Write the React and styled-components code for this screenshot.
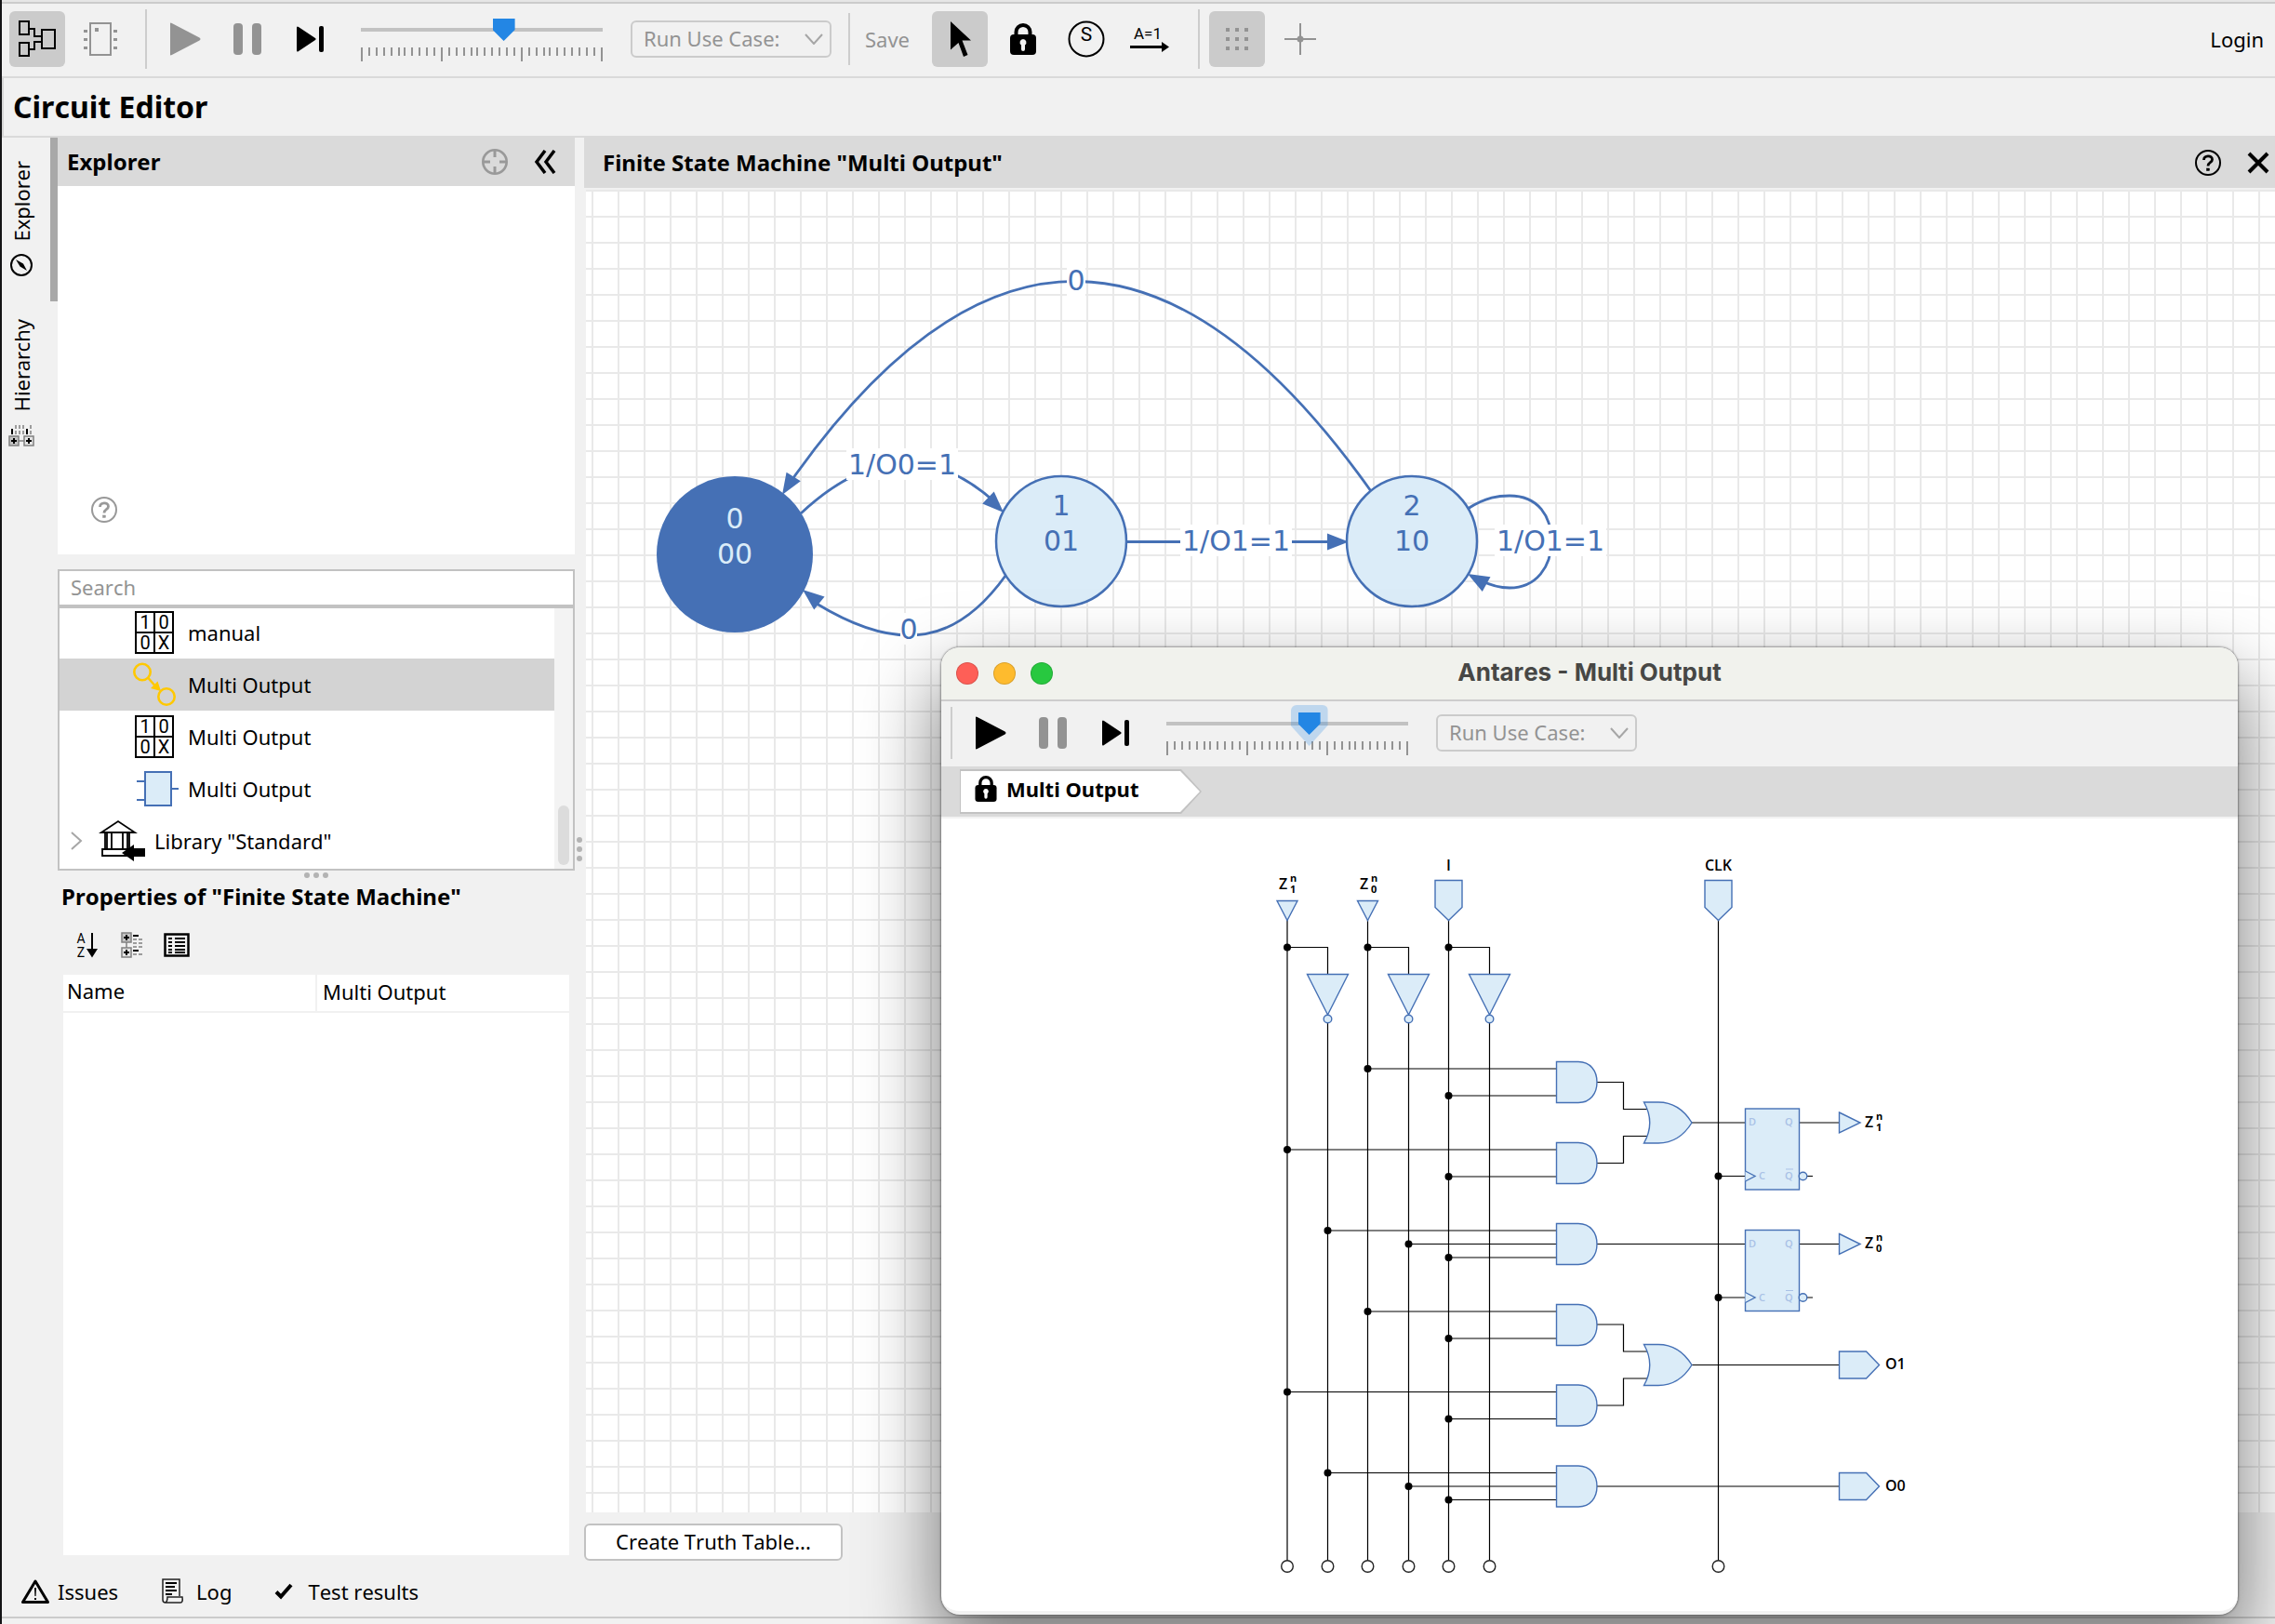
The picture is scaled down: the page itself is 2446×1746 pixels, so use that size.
import React, { useState } from "react";
import styled, { createGlobalStyle, css } from "styled-components";

const BLUE = "#4570b5";
const PALE = "#dbecf8";
const GREY = "#939393";
const BAR = "#dadada";
const CHROME = "#f1f1f1";

const Global = createGlobalStyle`
  *, *::before, *::after { box-sizing: border-box; }
  body {
    margin: 0;
    background: ${CHROME};
    color: #000;
    font-family: "Noto Sans", "Open Sans", sans-serif;
    font-size: 22px;
    line-height: 32px;
    font-kerning: none;
  }
  button, input, select { font: inherit; color: inherit; margin: 0; font-kerning: none; }
  h1, h2, h3, ul { margin: 0; padding: 0; }
`;

/* ---------- shell ---------- */

const App_ = styled.div`
  position: relative;
  display: flex;
  flex-direction: column;
  height: 100vh;
  border-left: 2px solid #141416;
  background: ${CHROME};
  overflow: hidden;
`;

const TopEdge = styled.div`
  height: 4px;
  border-bottom: 2px solid #cbcbcb;
  background: #e6e6e6;
`;

const Toolbar = styled.header`
  display: flex;
  align-items: center;
  height: 80px;
  padding: 0 12px 2px 8px;
  border-bottom: 2px solid ${BAR};
`;

const ToolGroup = styled.div`
  display: flex;
  align-items: center;
  gap: 8px;
`;

const TitleBar = styled.div`
  display: flex;
  align-items: center;
  height: 64px;
  padding-left: 10px;
  border-left: 2px solid #d6d6d6;
  border-bottom: 2px solid ${BAR};
`;

const Title = styled.h1`
  font-size: 32px;
  line-height: 40px;
`;

const Main = styled.main`
  display: flex;
  flex: 1;
  min-height: 0;
`;

const StatusBar = styled.footer`
  display: flex;
  align-items: center;
  gap: 46px;
  height: 60px;
  padding: 0 20px 4px;
  border-bottom: 6px solid ${CHROME};
  box-shadow: inset 0 -2px 0 #cbcbcb;
`;

/* ---------- buttons ---------- */

const plain = css`
  display: inline-flex;
  align-items: center;
  justify-content: center;
  padding: 0;
  border: 0;
  background: none;
`;

const ToolButton = styled.button`
  ${plain}
  flex: none;
  width: ${(p) => (p.$wide ? 60 : 50)}px;
  height: 60px;
  border-radius: 6px;
  background: ${(p) => (p.$active ? "#cbcbcb" : "none")};
`;

const TextButton = styled.button`
  ${plain}
  gap: ${(p) => p.$gap || 0}px;
  color: ${(p) => (p.$muted ? GREY : "#000")};
`;

const SaveButton = styled(TextButton)`
  margin-right: 24px;
`;

const IconButton = styled.button`
  ${plain}
  width: 28px;
  height: 28px;
`;

const PushButton = styled.button`
  ${plain}
  height: 40px;
  padding: 0 32px 2px;
  border: 2px solid #c2c2c2;
  border-radius: 6px;
  background: #fff;
`;

const Spacer = styled.div`
  flex: 1;
`;

const Separator = styled.div`
  flex: none;
  width: 2px;
  height: ${(p) => p.$height || 64}px;
  margin: 0 ${(p) => p.$after || 0}px 0 ${(p) => p.$before || 0}px;
  background: #cdcdcd;
`;

/* ---------- transport (play / pause / step / speed / use case) ---------- */

const TransportRow = styled.div`
  display: flex;
  align-items: center;
`;

const PlayGroup = styled.div`
  display: flex;
  gap: 17px;
`;

const SpeedBox = styled.div`
  position: relative;
  display: flex;
  flex-direction: column;
  width: 260px;
  height: 60px;
  margin: 0 30px;
  padding-top: 8px;
`;

const thumbShape = css`
  clip-path: polygon(0 0, 100% 0, 100% 50%, 50% 100%, 0 50%);
`;

const Speed = styled.input`
  appearance: none;
  width: 100%;
  height: 24px;
  background: linear-gradient(#c2c2c2, #c2c2c2) center 10px / 100% 4px no-repeat;
  outline: none;

  &::-webkit-slider-thumb {
    appearance: none;
    width: 24px;
    height: 24px;
    background: #2386e4;
    ${thumbShape}
  }
`;

const Halo = styled.span`
  position: absolute;
  top: 0;
  width: 40px;
  height: 44px;
  border-radius: 6px 6px 0 0;
  background: rgba(35, 134, 228, 0.24);
  pointer-events: none;
  ${thumbShape}
`;

const Ticks = styled.svg`
  display: block;
  margin-top: 7px;
  overflow: visible;
`;

const SelectBox = styled.label`
  position: relative;
  display: flex;
  align-items: center;
  width: 216px;
  height: 40px;

  svg {
    position: absolute;
    right: 9px;
    pointer-events: none;
  }
`;

const Select = styled.select`
  appearance: none;
  width: 100%;
  height: 100%;
  padding: 0 36px 2px 12px;
  border: 2px solid #cbcbcb;
  border-radius: 6px;
  background: ${CHROME};
  color: ${GREY};
`;

const TICK_STEPS = [
  [8, 8, 8, 8, 8, 6, 8, 8, 8, 8, 8],
  [8, 8, 8, 8, 6, 8, 8, 8, 8, 8, 8],
  [8, 8, 8, 6, 8, 8, 8, 8, 8, 8, 8],
];

function TickMarks() {
  const marks = [];
  let x = 0;
  TICK_STEPS.forEach((group) =>
    group.forEach((step, i) => {
      marks.push([x, i === 0]);
      x += step;
    })
  );
  marks.push([x, true]);
  return (
    <Ticks width="260" height="16" aria-hidden="true">
      {marks.map(([at, major]) => (
        <rect key={at} x={at} y="0" width="2" height={major ? 15 : 9} fill={GREY} />
      ))}
    </Ticks>
  );
}

function Transport({ playing, focused, name }) {
  const [speed, setSpeed] = useState(60);
  return (
    <TransportRow>
      <PlayGroup>
        <ToolButton aria-label="Play">
          <svg width="34" height="36" viewBox="0 0 34 36">
            <path d="M1 1.5Q1-.2 2.800 1L32.500 16.500Q34.500 18 32.500 19.500L2.800 35Q1 36.200 1 34.500Z" fill={playing ? "#000" : GREY} />
          </svg>
        </ToolButton>
        <ToolButton aria-label="Pause">
          <svg width="30" height="34" viewBox="0 0 30 34" fill={GREY}>
            <rect width="10" height="34" rx="4" />
            <rect x="20" width="10" height="34" rx="4" />
          </svg>
        </ToolButton>
        <ToolButton aria-label="Step">
          <svg width="30" height="30" viewBox="0 0 30 30">
            <path d="M1 3Q1 .5 3 2L21 14Q22.500 15 21 16L3 28Q1 29.500 1 27Z" />
            <rect x="25" y="1" width="5" height="28" rx="2" />
          </svg>
        </ToolButton>
      </PlayGroup>
      <SpeedBox>
        {focused && <Halo style={{ left: (speed / 100) * 236 - 8 }} />}
        <Speed
          type="range"
          min="0"
          max="100"
          value={speed}
          aria-label={name + " speed"}
          onChange={(e) => setSpeed(Number(e.target.value))}
        />
        <TickMarks />
      </SpeedBox>
      <SelectBox>
        <Select aria-label={name + " use case"}>
          <option>Run Use Case:</option>
        </Select>
        <svg width="20" height="12" viewBox="0 0 20 12" fill="none" stroke="#a6a6a6" strokeWidth="2">
          <path d="M1 1L10 11L19 1" />
        </svg>
      </SelectBox>
    </TransportRow>
  );
}

/* ---------- icons ---------- */

const CircuitIcon = () => (
  <svg width="42" height="50" viewBox="0 0 42 50" fill="none" stroke="#000" strokeWidth="2">
    <rect x="2" y="6" width="10" height="14" />
    <rect x="2" y="29" width="10" height="14" />
    <rect x="26" y="15" width="14" height="20" />
    <path d="M12 14H18V22H26M12 36H18V28H26" />
  </svg>
);

const ChipIcon = () => (
  <svg width="36" height="36" viewBox="0 0 36 36" fill={GREY}>
    <rect x="7" y="1" width="22" height="34" fill="none" stroke={GREY} strokeWidth="2" />
    <path d="M12 6h4v4h-4zM0 8h4v3H0zM0 17h4v3H0zM0 26h4v3H0zM32 8h4v3h-4zM32 17h4v3h-4zM32 26h4v3h-4z" />
  </svg>
);

const PointerIcon = () => (
  <svg width="26" height="40" viewBox="0 0 26 40">
    <path d="M3 1L25 21.500H15.500L21.500 37L17 39L11.500 24L3 31.500Z" />
  </svg>
);

const LockIcon = ({ width = 28, height = 34, hole = CHROME }) => (
  <svg width={width} height={height} viewBox="0 0 28 34">
    <path d="M6.500 14V9.500a7.500 7.500 0 0 1 15 0V14" fill="none" stroke="#000" strokeWidth="4" />
    <rect y="12" width="28" height="22" rx="4" />
    <path d="M14 17a3.600 3.600 0 0 1 2 6.500V28a2 2 0 0 1-4 0V23.500A3.600 3.600 0 0 1 14 17Z" fill={hole} />
  </svg>
);

const StateIcon = () => (
  <svg width="40" height="40" viewBox="0 0 40 40">
    <circle cx="20" cy="20" r="18.500" fill="none" stroke="#000" strokeWidth="2" />
    <text x="20" y="22" fontSize="21" fontFamily="Roboto, sans-serif" textAnchor="middle">S</text>
  </svg>
);

const AssignIcon = () => (
  <svg width="42" height="34" viewBox="0 0 42 34">
    <text x="19" y="17" fontSize="17" fontFamily="Roboto, sans-serif" textAnchor="middle">A=1</text>
    <path d="M0 24H34V20L42 25.500L34 31V27H0Z" />
  </svg>
);

const DotGridIcon = () => (
  <svg width="26" height="26" viewBox="0 0 26 26" fill={GREY}>
    {[0, 10, 20].map((y) => [0, 10, 20].map((x) => <rect key={x + "-" + y} x={x + 1} y={y + 1} width="4" height="4" />))}
  </svg>
);

const CrossIcon = () => (
  <svg width="34" height="34" viewBox="0 0 34 34" fill={GREY}>
    <path d="M16 0h2v34h-2zM0 16h34v2H0z" />
    <circle cx="17" cy="17" r="3.500" />
  </svg>
);

const HelpIcon = ({ color = "#000" }) => (
  <svg width="28" height="28" viewBox="0 0 28 28" fill="none" stroke={color}>
    <circle cx="14" cy="14" r="13" strokeWidth="2" />
    <path d="M9.500 11C9.500 5.500 18.500 5.500 18.500 10.500C18.500 14 14 13.500 14 17.500" strokeWidth="2.800" />
    <rect x="12.500" y="20" width="3" height="2.500" fill={color} strokeWidth="0.500" />
  </svg>
);

const TargetIcon = () => (
  <svg width="28" height="28" viewBox="0 0 28 28" fill="none" stroke="#999">
    <circle cx="14" cy="14" r="12.700" strokeWidth="2.600" />
    <path d="M14 2V9M14 19V26M2 14H9M19 14H26" strokeWidth="3" />
  </svg>
);

const CollapseIcon = () => (
  <svg width="24" height="26" viewBox="0 0 24 26" fill="none" stroke="#000" strokeWidth="3.500">
    <path d="M12 1L3 13L12 25M22 1L13 13L22 25" />
  </svg>
);

const CloseIcon = () => (
  <svg width="24" height="24" viewBox="0 0 24 24" stroke="#000" strokeWidth="4">
    <path d="M2 2L22 22M22 2L2 22" />
  </svg>
);

const CompassIcon = () => (
  <svg width="26" height="26" viewBox="0 0 26 26">
    <circle cx="13" cy="13" r="11" fill="none" stroke="#000" strokeWidth="2" />
    <path d="M7 7L15 11.500L19 19L11.500 14.500Z" />
  </svg>
);

const TreeIcon = ({ turned }) => (
  <svg width="28" height="28" viewBox="0 0 28 28" fill="none" stroke="#808080">
    <g transform={turned ? "rotate(-90 14 14)" : undefined}>
      <path d="M8 10V18" strokeWidth="1.500" />
      <rect x="3" y="1" width="10" height="10" strokeWidth="1.500" fill="#c4c4c4" />
      <rect x="3" y="17" width="10" height="10" strokeWidth="1.500" fill="#e4e4e4" />
      <path d="M5 6H11M8 3V9M5 22H11M8 19V25" stroke="#000" strokeWidth="2" />
      <path d="M15 4H21M15 20H21" stroke="#000" strokeWidth="2" />
      <path d="M15 8H19M21 8H25M15 12H19M21 12H25M15 16H19M21 16H25M15 24H19M21 24H25" strokeWidth="1.500" />
    </g>
  </svg>
);

const SortIcon = () => (
  <svg width="28" height="28" viewBox="0 0 28 28" overflow="visible">
    <text x="7" y="12" fontSize="14" fontFamily="Roboto, sans-serif" textAnchor="middle">A</text>
    <text x="7" y="27" fontSize="14" fontFamily="Roboto, sans-serif" textAnchor="middle">Z</text>
    <path d="M18 1h2v17h5L19 27.500L13 18h5Z" />
  </svg>
);

const ListIcon = () => (
  <svg width="28" height="26" viewBox="0 0 28 26">
    <rect x="1.500" y="1.500" width="25" height="23" fill="none" stroke="#000" strokeWidth="2.500" />
    <path d="M5 5h4v2H5zM5 9h4v2H5zM5 13h4v2H5zM5 17h4v2H5zM5 20h4v2H5zM12 5h11v2H12zM12 9h11v2H12zM12 13h11v2H12zM12 17h11v2H12zM12 20h11v2H12z" />
  </svg>
);

const TruthIcon = () => (
  <svg width="48" height="48" viewBox="0 0 48 48">
    <path d="M4 2H44V46H4ZM24 2V46M4 24H44" fill="none" stroke="#000" strokeWidth="2" />
    <g fontSize="20" fontFamily="Roboto, sans-serif" textAnchor="middle">
      <text x="14" y="20">1</text>
      <text x="34" y="20">0</text>
      <text x="14" y="42">0</text>
      <text x="34" y="42">X</text>
    </g>
  </svg>
);

const FsmIcon = () => (
  <svg width="48" height="48" viewBox="0 0 48 48" fill="none" stroke="#ffc800" strokeWidth="2.600">
    <circle cx="11" cy="10.500" r="8.700" />
    <circle cx="37" cy="37" r="8.700" />
    <path d="M17 16.500L24 24.500" />
    <path d="M31 31L20 28L27.500 20.500Z" fill="#ffc800" stroke="none" />
  </svg>
);

const BlockIcon = () => (
  <svg width="48" height="48" viewBox="0 0 48 48" fill={PALE} stroke={BLUE} strokeWidth="2">
    <rect x="14" y="6" width="28" height="36" />
    <path d="M5 16H13M5 36H13M43 24H50" />
  </svg>
);

const LibraryIcon = () => (
  <svg width="48" height="48" viewBox="0 0 48 48" fill="none" stroke="#000" strokeWidth="2">
    <path d="M1 15L19 3L37 15ZM5 15V33M12 15V33M24 15V33M31 15V33M2 33H36V40H2ZM7 15V33M29 15V33" strokeWidth="1.800" />
    <path d="M23 37L36 28V32H48V41H36V46Z" fill="#000" stroke="none" />
  </svg>
);

const ExpandIcon = () => (
  <svg width="12" height="20" viewBox="0 0 12 20" fill="none" stroke="#a6a6a6" strokeWidth="2">
    <path d="M1 1L11 10L1 19" />
  </svg>
);

const IssuesIcon = () => (
  <svg width="32" height="28" viewBox="0 0 32 28">
    <path d="M16 3L29.500 25.500H2.500Z" fill="none" stroke="#000" strokeWidth="3" strokeLinejoin="round" />
    <path d="M15 10h2l-.4 9h-1.200zM15 21h2v2h-2z" />
  </svg>
);

const LogIcon = () => (
  <svg width="26" height="28" viewBox="0 0 26 28" fill="none" stroke="#222" strokeWidth="1.500">
    <path d="M20 19V1H2V23Q2 26 5 26H21Q24 26 23 20H7Q7 26 4 26" />
    <path d="M5 5H17M5 9H15M5 13H17M5 17H12" stroke="#000" strokeWidth="2" />
  </svg>
);

const CheckIcon = () => (
  <svg width="20" height="18" viewBox="0 0 20 18" fill="none" stroke="#000" strokeWidth="4">
    <path d="M2 9.500L7 14.500L18 2" />
  </svg>
);

/* ---------- left side ---------- */

const SideTabs = styled.nav`
  display: flex;
  flex: none;
  flex-direction: column;
  width: 60px;
`;

const SideTab = styled.button`
  ${plain}
  flex-direction: column;
  justify-content: flex-end;
  gap: 12px;
  height: ${(p) => (p.$active ? 176 : 168)}px;
  padding: 0 10px ${(p) => (p.$active ? 26 : 10)}px 0;
  border-right: 8px solid ${(p) => (p.$active ? "#a8a8a8" : "transparent")};

  span {
    writing-mode: vertical-rl;
    transform: rotate(180deg);
  }
`;

const LeftColumn = styled.aside`
  display: flex;
  flex: none;
  flex-direction: column;
  width: 556px;
  padding-bottom: 14px;
`;

const PaneHeader = styled.div`
  display: flex;
  flex: none;
  align-items: center;
  gap: 26px;
  height: ${(p) => (p.$tall ? 54 : 52)}px;
  padding: 0 ${(p) => (p.$tall ? 4 : 18)}px 0 ${(p) => (p.$tall ? 20 : 10)}px;
  background: ${BAR};
`;

const PaneTitle = styled.h2`
  font-size: 24px;
  line-height: 36px;
`;

const Preview = styled.div`
  display: flex;
  flex: none;
  align-items: flex-end;
  height: 396px;
  margin-bottom: 16px;
  padding: 0 36px 34px;
  background: #fff;
`;

const Search = styled.input`
  flex: none;
  height: 40px;
  padding: 0 12px 2px;
  border: 2px solid #c2c2c2;
  border-radius: 0;
  background: #fff;

  &::placeholder {
    color: ${GREY};
    opacity: 1;
  }
`;

const TreeBox = styled.div`
  display: flex;
  flex: none;
  height: 284px;
  border: 2px solid #c2c2c2;
  background: #fff;
`;

const Tree = styled.ul`
  display: flex;
  flex: 1;
  flex-direction: column;
  justify-content: flex-end;
  padding-bottom: 2px;
  overflow: hidden;
  list-style: none;
`;

const TreeRow = styled.li`
  flex: none;
  height: 56px;
  background: ${(p) => (p.$selected ? "#d3d3d3" : "transparent")};

  button {
    ${plain}
    justify-content: flex-start;
    gap: ${(p) => (p.$root ? 10 : 12)}px;
    width: 100%;
    height: 100%;
    padding-left: ${(p) => (p.$root ? 12 : 78)}px;
  }

  button > svg:first-child:not(:only-of-type) {
    margin-right: 10px;
  }

  svg {
    overflow: visible;
  }
`;

const ScrollTrack = styled.div`
  display: flex;
  align-items: flex-end;
  justify-content: center;
  width: 20px;
  padding-bottom: 4px;
  background: #f3f3f3;

  &::after {
    content: "";
    width: 12px;
    height: 64px;
    border-radius: 6px;
    background: #dcdcdc;
  }
`;

const Grip = styled.div`
  display: flex;
  flex: none;
  flex-direction: ${(p) => (p.$vertical ? "column" : "row")};
  align-items: center;
  justify-content: center;
  gap: 4px;
  ${(p) => (p.$vertical ? "width: 10px; padding-bottom: 8px;" : "height: 10px;")}

  i {
    width: 6px;
    height: 6px;
    border-radius: 50%;
    background: #b3b3b3;
  }
`;

const SectionTitle = styled(PaneTitle)`
  padding-left: 4px;
`;

const PropertyTools = styled.div`
  display: flex;
  align-items: center;
  gap: 20px;
  height: 66px;
  padding: 2px 0 0 18px;
`;

const PropertySheet = styled.div`
  flex: 1;
  margin: 0 6px;
  background: #fff;
`;

const PropertyTable = styled.table`
  width: 100%;
  border-collapse: collapse;
  table-layout: fixed;

  th, td {
    height: 40px;
    padding: 0 6px 4px;
    border-bottom: 2px solid ${CHROME};
    font-weight: 400;
    text-align: left;
  }

  th {
    padding: 0 4px 6px;
  }

  td {
    border-left: 2px solid ${CHROME};
  }
`;

const ROWS = [
  { label: "manual", Icon: TruthIcon },
  { label: "Multi Output", Icon: FsmIcon, selected: true },
  { label: "Multi Output", Icon: TruthIcon },
  { label: "Multi Output", Icon: BlockIcon },
];

/* ---------- state machine ---------- */

const Editor = styled.section`
  display: flex;
  flex: 1;
  flex-direction: column;
  min-width: 0;
`;

const Canvas = styled.div`
  flex: 1;
  min-height: 0;
  margin-left: 2px;
  border-top: 2px solid ${CHROME};
  background:
    linear-gradient(#e9e9e9 2px, transparent 2px) 0 0 / 28px 28px,
    linear-gradient(90deg, transparent 6px, #e9e9e9 6px, #e9e9e9 8px, transparent 8px) 0 0 / 28px 28px,
    #fff;
`;

const Actions = styled.div`
  display: flex;
  padding: 12px 0 8px;
`;

const Diagram = styled.svg`
  display: block;
  overflow: visible;
  font-family: "DejaVu Sans", sans-serif;
  font-size: 30px;
`;

const STATES = [
  { x: 790, y: 596, r: 84, id: "0", code: "00", first: 568, filled: true },
  { x: 1141, y: 582, r: 70, id: "1", code: "01", first: 554 },
  { x: 1518, y: 582, r: 70, id: "2", code: "10", first: 554 },
];

function Tag({ x, y, width, children }) {
  return (
    <g>
      <rect x={x - width / 2} y={y - 28} width={width} height="34" fill="#fff" />
      <text x={x} y={y} textAnchor="middle" fill={BLUE}>{children}</text>
    </g>
  );
}

function Head({ x, y, angle }) {
  return <path d="M0 0L-23-9V9Z" fill={BLUE} transform={`translate(${x} ${y}) rotate(${angle})`} />;
}

function StateMachine() {
  return (
    <Diagram width="1140" height="520" viewBox="630 204 1140 520" role="img" aria-label="Finite state machine">
      <g fill="none" stroke={BLUE} strokeWidth="2.800">
        <path d="M1474 528Q1157 82 850 518" />
        <path d="M861 552Q970 450 1070 540" />
        <path d="M1081 619C1030 690 970 705 878 649" />
        <path d="M1211 582.500H1430" />
        <path d="M1578 547C1598 534 1612 533 1623 533C1654 533 1668 555 1668 582C1668 609 1652 632 1623 632C1610 632 1600 628 1592 624" />
      </g>
      <Head x={841} y={532} angle={122} />
      <Head x={1079} y={551} angle={44} />
      <Head x={863} y={634} angle={219} />
      <Head x={1450} y={582.5} angle={0} />
      <Head x={1578} y={617} angle={209} />
      {STATES.map((s) => (
        <g key={s.id} textAnchor="middle" fill={s.filled ? PALE : BLUE}>
          <circle cx={s.x} cy={s.y} r={s.r} fill={s.filled ? BLUE : PALE} stroke={s.filled ? "none" : BLUE} strokeWidth="2.500" />
          <text x={s.x} y={s.first}>{s.id}</text>
          <text x={s.x} y={s.first + 38}>{s.code}</text>
        </g>
      ))}
      <Tag x={1157} y={312} width={20}>0</Tag>
      <Tag x={970} y={510} width={120}>1/O0=1</Tag>
      <Tag x={977} y={687} width={18}>0</Tag>
      <Tag x={1329} y={592} width={120}>1/O1=1</Tag>
      <Tag x={1667} y={592} width={120}>1/O1=1</Tag>
    </Diagram>
  );
}

/* ---------- circuit window ---------- */

const Window = styled.section`
  position: absolute;
  top: 696px;
  right: 40px;
  bottom: 10px;
  left: 1010px;
  display: flex;
  flex-direction: column;
  border-bottom: 4px solid #f2f2f2;
  border-radius: 20px;
  background: #fff;
  box-shadow: 0 0 2px 1px rgba(0, 0, 0, 0.35), 0 36px 80px 4px rgba(0, 0, 0, 0.5);
  overflow: hidden;
`;

const WindowBar = styled.div`
  display: flex;
  align-items: center;
  height: 58px;
  padding: 0 16px;
  border-bottom: 2px solid #cdcdcd;
  background: #f1f2ed;
`;

const Lights = styled.div`
  display: flex;
  flex: 1;
  gap: 16px;
`;

const Light = styled.button`
  width: 24px;
  height: 24px;
  padding: 0;
  border: 1px solid rgba(0, 0, 0, 0.14);
  border-radius: 50%;
  background: ${(p) => p.$color};
`;

const WindowTitle = styled.h2`
  padding-bottom: 2px;
  color: #474745;
  font-family: Inter, sans-serif;
  font-size: 26px;
  font-weight: 700;
  line-height: 32px;
`;

const WindowTools = styled.div`
  display: flex;
  align-items: center;
  height: 70px;
  padding: 0 0 2px 10px;
  background: ${CHROME};
`;

const Crumbs = styled.nav`
  display: flex;
  align-items: center;
  height: 56px;
  padding-left: 20px;
  border-bottom: 2px solid #f2f2f2;
  background: ${BAR};
`;

const Crumb = styled.button`
  ${plain}
  justify-content: flex-start;
  gap: 10px;
  width: 260px;
  height: 48px;
  padding: 0 0 6px 16px;
  background: #c2c2c2;
  font-weight: 700;
  clip-path: polygon(0 0, 238px 0, 100% 50%, 238px 100%, 0 100%);
  position: relative;
  isolation: isolate;

  &::before {
    content: "";
    position: absolute;
    inset: 2px 2px 2px 1px;
    z-index: -1;
    background: #fff;
    clip-path: polygon(0 0, 236px 0, 100% 50%, 236px 100%, 0 100%);
  }
`;

const Sheet = styled.div`
  display: flex;
  flex: 1;
  justify-content: center;
  padding-top: 30px;
`;

const Schematic = styled.svg`
  display: block;
  font-family: "Open Sans", "Noto Sans", sans-serif;
  font-size: 16px;
`;

const COLS = { z1: 1384, z1n: 1427.5, z0: 1470.5, z0n: 1514.5, i: 1557.5, in: 1601.5, clk: 1847.5 };

const GATES = [
  { y: 1163.5, ins: [["z0", -14.5], ["i", 14.5]] },
  { y: 1250.5, ins: [["z1", -14.5], ["i", 14.5]] },
  { y: 1337.5, ins: [["z1n", -14.5], ["z0n", 0], ["i", 14.5]] },
  { y: 1424.5, ins: [["z0", -14.5], ["i", 14.5]] },
  { y: 1511, ins: [["z1", -14.5], ["i", 14.5]] },
  { y: 1598, ins: [["z1n", -14.5], ["z0n", 0], ["i", 14.5]] },
];

function Indexed({ x, y, sub }) {
  return (
    <g>
      <text x={x} y={y} fontWeight="600">Z</text>
      <g fontSize="11" fontWeight="700">
        <text x={x + 12} y={y - 8}>n</text>
        <text x={x + 12} y={y + 4}>{sub}</text>
      </g>
    </g>
  );
}

function FlipFlop({ y }) {
  return (
    <g>
      <path d={`M1935 ${y + 15}H1978M${COLS.clk} ${y + 72.5}H1876M1943 ${y + 72.5}H1949`} stroke="#000" strokeWidth="1.200" />
      <rect x="1876.500" y={y} width="58" height="87" />
      <path d={`M1876.500 ${y + 67}L1887 ${y + 72.500}L1876.500 ${y + 78}`} />
      <circle cx="1938.500" cy={y + 72.5} r="4.300" />
      <path d={`M1920 ${y + 65}H1928`} stroke="#a9c1e6" strokeWidth="1" />
      <g fill="#a9c1e6" stroke="none" fontSize="11" fontWeight="600">
        <text x="1880" y={y + 18}>D</text>
        <text x="1919" y={y + 18}>Q</text>
        <text x="1891" y={y + 76}>C</text>
        <text x="1919" y={y + 76}>Q</text>
      </g>
      <circle cx={COLS.clk} cy={y + 72.5} r="4" fill="#000" stroke="none" />
      <path d={`M1977.500 ${y + 4}L2000 ${y + 15}L1977.500 ${y + 26}Z`} />
    </g>
  );
}

function Circuit() {
  const inputs = [
    [COLS.z1, COLS.z1n],
    [COLS.z0, COLS.z0n],
    [COLS.i, COLS.in],
  ];
  return (
    <Schematic width="690" height="790" viewBox="1364 910 690 790" role="img" aria-label="Circuit Multi Output">
      <g fill="none" stroke="#000" strokeWidth="1.200">
        {inputs.map(([a, b]) => (
          <path key={a} d={`M${a} 989V1678M${a} 1018.500H${b}V1047M${b} 1100V1678`} />
        ))}
        <path d={`M${COLS.clk} 989V1678`} />
        {GATES.map((g) => g.ins.map(([c, dy]) => <path key={c + g.y} d={`M${COLS[c]} ${g.y + dy}H1673`} />))}
        {[1207, 1467.5].map((y) => (
          <path key={y} d={`M1717 ${y - 43.5}H1745.500V${y - 14.5}H1771M1717 ${y + 43.5}H1745.500V${y + 14.5}H1771`} />
        ))}
        <path d="M1819 1207H1876M1717 1337.500H1876M1819 1467.500H1978M1717 1598H1978" />
      </g>
      <g>
        {inputs.map(([a]) => <circle key={a} cx={a} cy="1018.500" r="4" />)}
        {GATES.map((g) => g.ins.map(([c, dy]) => <circle key={c + g.y} cx={COLS[c]} cy={g.y + dy} r="4" />))}
      </g>
      <g fill={PALE} stroke={BLUE} strokeWidth="1.400">
        {[COLS.z1, COLS.z0].map((x) => <path key={x} d={`M${x - 11} 968.500H${x + 11}L${x} 989.500Z`} />)}
        {[COLS.i, COLS.clk].map((x) => (
          <path key={x} d={`M${x - 14.5} 946.500H${x + 14.5}V975.500L${x} 989.500L${x - 14.5} 975.500Z`} />
        ))}
        {inputs.map(([, b]) => (
          <g key={b}>
            <path d={`M${b - 22} 1047.500H${b + 22}L${b} 1091Z`} />
            <circle cx={b} cy="1095.500" r="4.300" />
          </g>
        ))}
        {GATES.map((g) => (
          <path key={g.y} d={`M1673.500 ${g.y - 22}H1697C1710 ${g.y - 22} 1717 ${g.y - 12} 1717 ${g.y}S1710 ${g.y + 22} 1697 ${g.y + 22}H1673.500Z`} />
        ))}
        {[1207, 1467.5].map((y) => (
          <path key={y} d={`M1767.500 ${y - 22}H1783C1800 ${y - 22} 1811 ${y - 13} 1819 ${y}C1811 ${y + 13} 1800 ${y + 22} 1783 ${y + 22}H1767.500Q1780 ${y} 1767.500 ${y - 22}Z`} />
        ))}
        <FlipFlop y={1192} />
        <FlipFlop y={1322.5} />
        {[1467.5, 1598].map((y) => (
          <path key={y} d={`M1977.500 ${y - 14.5}H2006.500L2020.500 ${y}L2006.500 ${y + 14.5}H1977.500Z`} />
        ))}
      </g>
      <g fill="#fff" stroke="#222" strokeWidth="1.400">
        {Object.values(COLS).map((x) => <circle key={x} cx={x} cy="1684" r="6.300" />)}
      </g>
      <Indexed x={1375} y={956} sub="1" />
      <Indexed x={1462} y={956} sub="0" />
      <Indexed x={2005} y={1212} sub="1" />
      <Indexed x={2005} y={1342} sub="0" />
      <g fontWeight="600">
        <text x={COLS.i} y="936" textAnchor="middle">I</text>
        <text x={COLS.clk} y="936" textAnchor="middle">CLK</text>
        <text x="2027" y="1472">O1</text>
        <text x="2027" y="1603">O0</text>
      </g>
    </Schematic>
  );
}

function CircuitWindow() {
  return (
    <Window aria-label="Antares">
      <WindowBar>
        <Lights>
          <Light $color="#fe5f57" aria-label="Close window" />
          <Light $color="#febb2e" aria-label="Minimize window" />
          <Light $color="#28c840" aria-label="Zoom window" />
        </Lights>
        <WindowTitle>Antares - Multi Output</WindowTitle>
        <Spacer />
      </WindowBar>
      <WindowTools>
        <Separator $height={56} $after={16} />
        <Transport playing focused name="Simulation" />
      </WindowTools>
      <Crumbs aria-label="Breadcrumb">
        <Crumb>
          <LockIcon width={24} height={28} hole="#fff" />
          Multi Output
        </Crumb>
      </Crumbs>
      <Sheet>
        <Circuit />
      </Sheet>
    </Window>
  );
}

/* ---------- page ---------- */

export default function App() {
  return (
    <App_>
      <Global />
      <TopEdge />
      <Toolbar>
        <ToolGroup>
          <ToolButton $wide $active aria-label="Circuit view"><CircuitIcon /></ToolButton>
          <ToolButton $wide aria-label="Chip view"><ChipIcon /></ToolButton>
        </ToolGroup>
        <Separator $before={18} $after={16} />
        <Transport name="Editor" />
        <Separator $height={56} $before={18} $after={16} />
        <SaveButton $muted>Save</SaveButton>
        <ToolGroup>
          <ToolButton $wide $active aria-label="Select"><PointerIcon /></ToolButton>
          <ToolButton $wide aria-label="Lock"><LockIcon /></ToolButton>
          <ToolButton $wide aria-label="Add state"><StateIcon /></ToolButton>
          <ToolButton $wide aria-label="Add transition"><AssignIcon /></ToolButton>
        </ToolGroup>
        <Separator $before={22} $after={10} />
        <ToolGroup>
          <ToolButton $wide $active aria-label="Show grid"><DotGridIcon /></ToolButton>
          <ToolButton $wide aria-label="Show crosshair"><CrossIcon /></ToolButton>
        </ToolGroup>
        <Spacer />
        <TextButton>Login</TextButton>
      </Toolbar>
      <TitleBar>
        <Title>Circuit Editor</Title>
      </TitleBar>
      <Main>
        <SideTabs aria-label="Views">
          <SideTab $active><span>Explorer</span><CompassIcon /></SideTab>
          <SideTab><span>Hierarchy</span><TreeIcon turned /></SideTab>
        </SideTabs>
        <LeftColumn>
          <PaneHeader>
            <PaneTitle>Explorer</PaneTitle>
            <Spacer />
            <IconButton aria-label="Locate"><TargetIcon /></IconButton>
            <IconButton aria-label="Collapse"><CollapseIcon /></IconButton>
          </PaneHeader>
          <Preview>
            <IconButton aria-label="Preview help"><HelpIcon color="#999" /></IconButton>
          </Preview>
          <Search type="text" placeholder="Search" aria-label="Search" />
          <TreeBox>
            <Tree>
              {ROWS.map((row, i) => (
                <TreeRow key={i} $selected={row.selected}>
                  <button><row.Icon />{row.label}</button>
                </TreeRow>
              ))}
              <TreeRow $root>
                <button><ExpandIcon /><LibraryIcon />Library "Standard"</button>
              </TreeRow>
            </Tree>
            <ScrollTrack />
          </TreeBox>
          <Grip><i /><i /><i /></Grip>
          <SectionTitle>Properties of "Finite State Machine"</SectionTitle>
          <PropertyTools>
            <IconButton aria-label="Sort by name"><SortIcon /></IconButton>
            <IconButton aria-label="Group"><TreeIcon /></IconButton>
            <IconButton aria-label="Show description"><ListIcon /></IconButton>
          </PropertyTools>
          <PropertySheet>
            <PropertyTable>
              <tbody>
                <tr>
                  <th scope="row">Name</th>
                  <td>Multi Output</td>
                </tr>
              </tbody>
            </PropertyTable>
          </PropertySheet>
        </LeftColumn>
        <Grip $vertical><i /><i /><i /></Grip>
        <Editor>
          <PaneHeader $tall>
            <PaneTitle>Finite State Machine "Multi Output"</PaneTitle>
            <Spacer />
            <IconButton aria-label="Help"><HelpIcon /></IconButton>
            <IconButton aria-label="Close"><CloseIcon /></IconButton>
          </PaneHeader>
          <Canvas>
            <StateMachine />
          </Canvas>
          <Actions>
            <PushButton>Create Truth Table...</PushButton>
          </Actions>
        </Editor>
      </Main>
      <StatusBar>
        <TextButton $gap={8}><IssuesIcon />Issues</TextButton>
        <TextButton $gap={12}><LogIcon />Log</TextButton>
        <TextButton $gap={16}><CheckIcon />Test results</TextButton>
      </StatusBar>
      <CircuitWindow />
    </App_>
  );
}
